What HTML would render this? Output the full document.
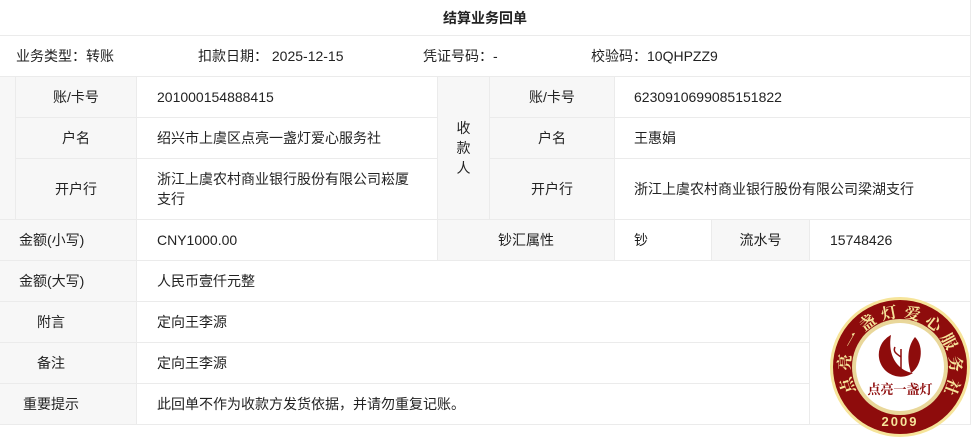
<!DOCTYPE html>
<html><head><meta charset="utf-8"><style>
*{margin:0;padding:0;box-sizing:border-box}
body{width:979px;height:448px;background:#fff;position:relative;overflow:hidden;font-family:"Liberation Sans","Noto Sans CJK SC",sans-serif;font-size:14px;color:#222}
.c{position:absolute;border-right:1px solid #ebebeb;border-bottom:1px solid #ebebeb;display:flex;align-items:center}
.g{background:#f7f7f7}
.ctr{justify-content:center}
.t{position:absolute;white-space:nowrap;line-height:20px}
</style></head><body>
<div class="c ctr" style="left:0;top:0;width:971px;height:36px;font-weight:bold">结算业务回单</div>
<div class="c" style="left:0;top:36px;width:971px;height:41px"></div>
<div class="t" style="left:16px;top:46px">业务类型：转账</div>
<div class="t" style="left:198px;top:46px">扣款日期：&nbsp;2025-12-15</div>
<div class="t" style="left:423px;top:46px">凭证号码：-</div>
<div class="t" style="left:591px;top:46px">校验码：10QHPZZ9</div>

<div class="c g" style="left:0;top:77px;width:16px;height:143px"></div>
<div class="c g ctr" style="left:16px;top:77px;width:121px;height:41px">账/卡号</div>
<div class="c g ctr" style="left:16px;top:118px;width:121px;height:41px">户名</div>
<div class="c g ctr" style="left:16px;top:159px;width:121px;height:61px">开户行</div>
<div class="c" style="left:137px;top:77px;width:301px;height:41px;padding-left:20px">201000154888415</div>
<div class="c" style="left:137px;top:118px;width:301px;height:41px;padding-left:20px">绍兴市上虞区点亮一盏灯爱心服务社</div>
<div class="c" style="left:137px;top:159px;width:301px;height:61px;padding-left:20px;line-height:20px">浙江上虞农村商业银行股份有限公司崧厦<br>支行</div>
<div class="c g ctr" style="left:438px;top:77px;width:52px;height:143px;text-align:center;line-height:20px">收<br>款<br>人</div>
<div class="c g ctr" style="left:490px;top:77px;width:125px;height:41px">账/卡号</div>
<div class="c g ctr" style="left:490px;top:118px;width:125px;height:41px">户名</div>
<div class="c g ctr" style="left:490px;top:159px;width:125px;height:61px">开户行</div>
<div class="c" style="left:615px;top:77px;width:356px;height:41px;padding-left:19px">6230910699085151822</div>
<div class="c" style="left:615px;top:118px;width:356px;height:41px;padding-left:19px">王惠娟</div>
<div class="c" style="left:615px;top:159px;width:356px;height:61px;padding-left:19px">浙江上虞农村商业银行股份有限公司梁湖支行</div>

<div class="c g" style="left:0;top:220px;width:137px;height:41px;padding-left:19px">金额(小写)</div>
<div class="c" style="left:137px;top:220px;width:301px;height:41px;padding-left:20px">CNY1000.00</div>
<div class="c g" style="left:438px;top:220px;width:177px;height:41px;padding-left:60px">钞汇属性</div>
<div class="c" style="left:615px;top:220px;width:97px;height:41px;padding-left:19px">钞</div>
<div class="c g ctr" style="left:712px;top:220px;width:98px;height:41px">流水号</div>
<div class="c" style="left:810px;top:220px;width:161px;height:41px;padding-left:20px">15748426</div>

<div class="c g" style="left:0;top:261px;width:137px;height:41px;padding-left:19px">金额(大写)</div>
<div class="c" style="left:137px;top:261px;width:834px;height:41px;padding-left:20px">人民币壹仟元整</div>
<div class="c g" style="left:0;top:302px;width:137px;height:41px;padding-left:37px">附言</div>
<div class="c" style="left:137px;top:302px;width:673px;height:41px;padding-left:20px">定向王李源</div>
<div class="c g" style="left:0;top:343px;width:137px;height:41px;padding-left:37px">备注</div>
<div class="c" style="left:137px;top:343px;width:673px;height:41px;padding-left:20px">定向王李源</div>
<div class="c g" style="left:0;top:384px;width:137px;height:41px;padding-left:23px">重要提示</div>
<div class="c" style="left:137px;top:384px;width:673px;height:41px;padding-left:20px">此回单不作为收款方发货依据，并请勿重复记账。</div>
<div class="c" style="left:810px;top:302px;width:161px;height:123px"></div>

<svg style="position:absolute;left:829px;top:297px" width="142" height="142" viewBox="0 0 142 142">
<defs><path id="arc" d="M23,97.5 A55,55 0 1,1 119,97.5"/></defs>
<circle cx="71" cy="70" r="70" fill="#f6e49a"/>
<circle cx="71" cy="70" r="67" fill="#8e0c0c"/>
<circle cx="71" cy="70" r="48" fill="#e9d79a"/>
<circle cx="71" cy="70" r="44" fill="#fff"/>
<text font-family="Noto Serif CJK SC,serif" font-size="16" fill="#f6e49a" font-weight="bold" dy="5"><textPath href="#arc" startOffset="2" textLength="226" lengthAdjust="spacing">点亮一盏灯爱心服务社</textPath></text>
<text x="71" y="129" text-anchor="middle" font-family="Liberation Sans,sans-serif" font-weight="bold" font-size="13" fill="#f6e49a" letter-spacing="2">2009</text>
<path d="M62,38 A22,22 0 1,0 84,76 C70,74 58,60 62,38Z" fill="#8e0c0c"/>
<path d="M86,40 C96,50 92,70 82,76 C78,64 78,50 86,40Z" fill="#8e0c0c"/>
<path d="M72,76 L72,52 M72,60 C66,56 64,54 66,50" stroke="#8e0c0c" stroke-width="1.5" fill="none"/>
<text x="71" y="97" text-anchor="middle" font-family="Noto Serif CJK SC,serif" font-size="13" fill="#8e0c0c" font-weight="bold">点亮一盏灯</text>
</svg>
</body></html>
